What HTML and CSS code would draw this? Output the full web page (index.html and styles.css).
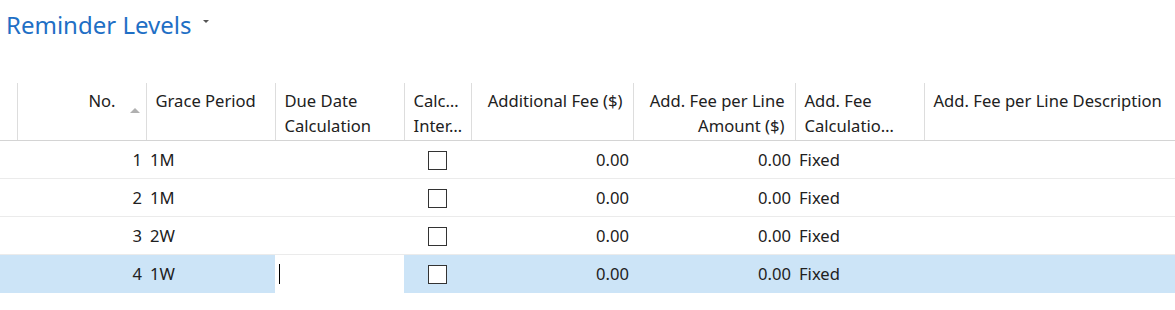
FILE: index.html
```html
<!DOCTYPE html>
<html lang="en">
<head>
    <meta charset="UTF-8">
    <meta name="viewport" content="width=device-width, initial-scale=1.0">
    <title>Reminder Levels</title>
    <link rel="stylesheet" href="styles.css">
</head>
<body>

<div class="page-title">
    <span class="title-text">Reminder Levels</span>
    <span class="title-caret"></span>
</div>

<table class="grid">
    <colgroup>
        <col class="c-sel">
        <col class="c-no">
        <col class="c-grace">
        <col class="c-due">
        <col class="c-calc">
        <col class="c-fee">
        <col class="c-line">
        <col class="c-type">
        <col class="c-desc">
    </colgroup>
    <thead>
        <tr>
            <th class="sel"></th>
            <th class="num sorted">No.<span class="sort-arrow"></span></th>
            <th>Grace Period</th>
            <th>Due Date<br>Calculation</th>
            <th>Calc…<br>Inter…</th>
            <th class="num">Additional Fee ($)</th>
            <th class="num">Add. Fee per Line<br>Amount ($)</th>
            <th>Add. Fee<br>Calculatio…</th>
            <th>Add. Fee per Line Description</th>
        </tr>
    </thead>
    <tbody>
        <tr>
            <td></td>
            <td class="num">1</td>
            <td>1M</td>
            <td></td>
            <td class="check"><span class="box"></span></td>
            <td class="num">0.00</td>
            <td class="num">0.00</td>
            <td>Fixed</td>
            <td></td>
        </tr>
        <tr>
            <td></td>
            <td class="num">2</td>
            <td>1M</td>
            <td></td>
            <td class="check"><span class="box"></span></td>
            <td class="num">0.00</td>
            <td class="num">0.00</td>
            <td>Fixed</td>
            <td></td>
        </tr>
        <tr>
            <td></td>
            <td class="num">3</td>
            <td>2W</td>
            <td></td>
            <td class="check"><span class="box"></span></td>
            <td class="num">0.00</td>
            <td class="num">0.00</td>
            <td>Fixed</td>
            <td></td>
        </tr>
        <tr class="selected">
            <td></td>
            <td class="num">4</td>
            <td>1W</td>
            <td class="editing"><span class="cursor"></span></td>
            <td class="check"><span class="box"></span></td>
            <td class="num">0.00</td>
            <td class="num">0.00</td>
            <td>Fixed</td>
            <td></td>
        </tr>
    </tbody>
</table>

</body>
</html>
```

FILE: styles.css
```css
body {
    margin: 0;
    font-family: "Noto Sans", "Open Sans", sans-serif;
    background-color: #ffffff;
    color: #212121;
}

.page-title {
    display: flex;
    align-items: center;
    padding: 9px 0 0 6px;
    height: 40px;
    box-sizing: border-box;
}
.title-text {
    font-size: 24px;
    color: #1f6fc5;
    line-height: 32px;
}
.title-caret {
    margin-left: 12px;
    margin-top: -6px;
    width: 0;
    height: 0;
    border-left: 3px solid transparent;
    border-right: 3px solid transparent;
    border-top: 3px solid #555555;
}

.grid {
    margin-top: 43px;
    width: 1175px;
    table-layout: fixed;
    border-collapse: collapse;
    font-size: 16.6px;
}
.c-sel { width: 17px; }
.c-no { width: 129px; }
.c-grace { width: 129px; }
.c-due { width: 129px; }
.c-calc { width: 67px; }
.c-fee { width: 162px; }
.c-line { width: 162px; }
.c-type { width: 129px; }
.c-desc { width: 251px; }

th {
    font-weight: normal;
    text-align: left;
    vertical-align: top;
    line-height: 25px;
    padding: 5px 9px 0 9px;
    height: 52px;
    border-left: 1px solid #dddddd;
    border-bottom: 1px solid #d4d4d4;
    white-space: nowrap;
    overflow: hidden;
}
th:first-child {
    border-left: none;
}
th.num {
    text-align: right;
    padding-right: 10px;
}
th.sorted {
    position: relative;
    padding-right: 30px;
}
.sort-arrow {
    position: absolute;
    right: 6px;
    top: 25px;
    width: 0;
    height: 0;
    border-left: 5px solid transparent;
    border-right: 5px solid transparent;
    border-bottom: 5px solid #b0b0b0;
}

td {
    height: 37px;
    padding: 0 4px;
    line-height: 20px;
    border-bottom: 1px solid #ebebeb;
    white-space: nowrap;
}
td.num {
    text-align: right;
}
td.check {
    text-align: center;
}
.box {
    display: inline-block;
    width: 17px;
    height: 17px;
    border: 1.5px solid #333333;
    vertical-align: middle;
    background-color: #ffffff;
}

tr.selected td {
    background-color: #cce4f7;
    border-bottom-color: #cce4f7;
}
tr.selected td.editing {
    background-color: #ffffff;
    border-bottom-color: #ffffff;
}
.cursor {
    display: inline-block;
    width: 1px;
    height: 20px;
    background-color: #000000;
    vertical-align: middle;
}
```
